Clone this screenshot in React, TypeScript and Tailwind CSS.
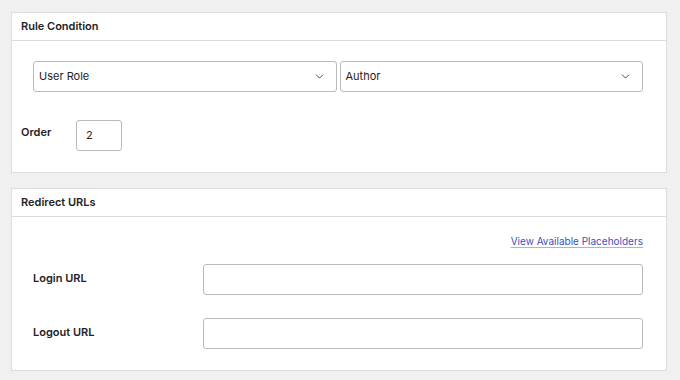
import { ChevronDown } from "lucide-react";

const font = { fontFamily: "Inter, 'Noto Sans', sans-serif" };

function Select({ value }: { value: string }) {
  return (
    <div className="flex h-[31px] flex-1 items-center justify-between rounded-[3px] border border-[#b8babe] bg-white pl-[5px] pr-[10px] text-[11px] text-[#1d2327]">
      <span>{value}</span>
      <ChevronDown size={13} strokeWidth={1.6} className="text-[#2c3338]" />
    </div>
  );
}

function Panel({ title, children }: { title: string; children: React.ReactNode }) {
  return (
    <div className="border border-[#dcdcde] bg-white">
      <div className="flex h-[28px] items-center border-b border-[#dcdcde] px-[9px] text-[11px] font-semibold text-[#1d2327]">
        {title}
      </div>
      {children}
    </div>
  );
}

export default function App() {
  return (
    <div style={font} className="flex h-[380px] w-[680px] flex-col gap-[15px] bg-[#f0f0f1] pl-[11px] pr-[13px] pt-[12px]">
      <Panel title="Rule Condition">
        <div className="h-[131px] pt-[20px]">
          <div className="flex gap-[3px] pl-[21px] pr-[23px]">
            <Select value="User Role" />
            <Select value="Author" />
          </div>
          <div className="mt-[28px] flex items-start pl-[9px]">
            <span className="mt-[4px] w-[55px] text-[11px] font-semibold text-[#1d2327]">Order</span>
            <div className="flex h-[31px] w-[46px] items-center rounded-[3px] border border-[#b8babe] pl-[9px] text-[11px] text-[#1d2327]">
              2
            </div>
          </div>
        </div>
      </Panel>
      <Panel title="Redirect URLs">
        <div className="h-[153px] pl-[21px] pr-[23px]">
          <div className="flex justify-end pt-[17px]">
            <a className="text-[10px] text-[#3c4fc0] underline decoration-[#aab2e0] underline-offset-2">
              View Available Placeholders
            </a>
          </div>
          <div className="mt-[15px] flex items-center">
            <span className="mb-[3px] w-[170px] text-[11px] font-semibold text-[#1d2327]">Login URL</span>
            <div className="h-[31px] flex-1 rounded-[3px] border border-[#b8babe]" />
          </div>
          <div className="mt-[23px] flex items-center">
            <span className="mb-[3px] w-[170px] text-[11px] font-semibold text-[#1d2327]">Logout URL</span>
            <div className="h-[31px] flex-1 rounded-[3px] border border-[#b8babe]" />
          </div>
        </div>
      </Panel>
    </div>
  );
}
